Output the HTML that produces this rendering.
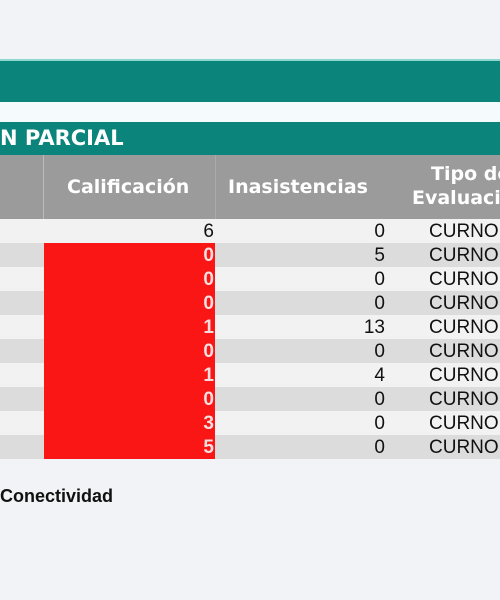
<!DOCTYPE html>
<html><head><style>
html,body{margin:0;width:500px;height:600px;overflow:hidden}
body{background:#f2f3f7;font-family:"Liberation Sans",sans-serif}
#w{position:relative;width:500px;height:600px;overflow:hidden}
#w div{position:absolute;white-space:nowrap}
.row{left:0;width:500px;height:24px;font-size:19px;line-height:25px;color:#111;overflow:hidden}
.r{left:44px;width:171px;height:24px;background:#fb1616}
.c{right:286px;text-align:right}
.i{right:115px;text-align:right}
.t{left:429px}
.h{color:#fff;font-weight:bold;font-family:"DejaVu Sans",sans-serif;font-size:19px}
</style></head><body><div id="w">
<div style="left:0;top:59px;width:500px;height:2px;background:#8fd6cf"></div>
<div style="left:0;top:61px;width:500px;height:41px;background:#0b857b"></div>
<div style="left:0;top:102px;width:500px;height:20px;background:#f5fafc"></div>
<div style="left:0;top:122px;width:500px;height:33px;background:#0b857b"></div>
<div class="h" style="left:0;top:126px;font-size:21px">N PARCIAL</div>
<div style="left:0;top:155px;width:500px;height:64px;background:#9b9b9b;overflow:hidden">
<div style="left:43px;top:0;width:1px;height:64px;background:#bbb"></div>
<div style="left:215px;top:0;width:1px;height:64px;background:#aaa"></div>
<div class="h" style="left:67px;top:21px">Calificación</div>
<div class="h" style="left:228px;top:21px">Inasistencias</div>
<div class="h" style="left:431px;top:8px">Tipo de</div>
<div class="h" style="left:412px;top:32px">Evaluación</div>
</div>
<div id="rows"></div>
<div style="left:0;top:486px;font-weight:bold;font-size:18px;color:#111">Conectividad</div>
</div>
<script>
var d=[["6","0",0],["0","5",1],["0","0",1],["0","0",1],["1","13",1],["0","0",1],["1","4",1],["0","0",1],["3","0",1],["5","0",1]];
var h="";
d.forEach(function(r,k){var top=219+k*24;
h+='<div class="row" style="top:'+top+'px;background:'+(k%2?'#dcdcdc':'#f2f2f2')+'">'+
(r[2]?'<div class="r" style="top:0"></div>':'')+
'<div class="c" style="'+(r[2]?'color:#f5dede;font-weight:bold':'')+'">'+r[0]+'</div>'+
'<div class="i">'+r[1]+'</div><div class="t">CURNO</div></div>';});
document.getElementById("rows").outerHTML=h;
</script>
</body></html>
